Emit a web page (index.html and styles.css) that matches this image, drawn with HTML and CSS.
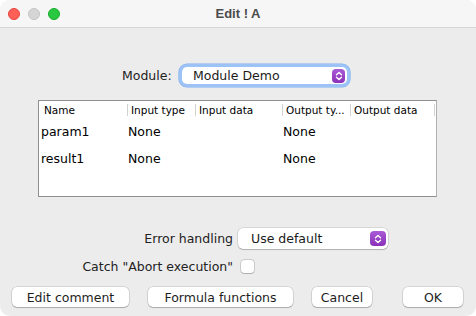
FILE: index.html
```html
<!DOCTYPE html>
<html>
<head>
<meta charset="utf-8">
<link rel="stylesheet" href="styles.css">
</head>
<body>
<div class="window">
  <div class="titlebar">
    <div class="lights">
      <span class="light red"></span>
      <span class="light gray"></span>
      <span class="light green"></span>
    </div>
    <div class="title">Edit ! A</div>
  </div>
  <div class="content">
    <div class="module-row">
      <span class="label">Module:</span>
      <div class="popup focused">
        <span class="popup-text">Module Demo</span>
        <span class="stepper"><svg width="8" height="10" viewBox="0 0 8 10"><path d="M1.5 3.8 L4 1.5 L6.5 3.8 M1.5 6.2 L4 8.5 L6.5 6.2" fill="none" stroke="#fff" stroke-width="1.4" stroke-linecap="round" stroke-linejoin="round"/></svg></span>
      </div>
    </div>
    <div class="table">
      <div class="thead">
        <div class="th first">Name</div>
        <div class="th">Input type</div>
        <div class="th">Input data</div>
        <div class="th">Output ty...</div>
        <div class="th">Output data</div>
        <div class="th last"></div>
      </div>
      <div class="tr">
        <div class="td first">param1</div>
        <div class="td">None</div>
        <div class="td"></div>
        <div class="td">None</div>
        <div class="td"></div>
      </div>
      <div class="tr">
        <div class="td first">result1</div>
        <div class="td">None</div>
        <div class="td"></div>
        <div class="td">None</div>
        <div class="td"></div>
      </div>
    </div>
    <div class="form">
      <span class="flabel">Error handling</span>
      <div class="popup plain">
        <span class="popup-text">Use default</span>
        <span class="stepper big"><svg width="8" height="10" viewBox="0 0 8 10"><path d="M1.5 3.8 L4 1.5 L6.5 3.8 M1.5 6.2 L4 8.5 L6.5 6.2" fill="none" stroke="#fff" stroke-width="1.4" stroke-linecap="round" stroke-linejoin="round"/></svg></span>
      </div>
      <span class="flabel">Catch "Abort execution"</span>
      <span class="checkbox"></span>
    </div>
    <div class="buttons">
      <button class="btn w-edit">Edit comment</button>
      <button class="btn w-formula">Formula functions</button>
      <button class="btn w-cancel">Cancel</button>
      <button class="btn w-ok">OK</button>
    </div>
  </div>
</div>
</body>
</html>
```

FILE: styles.css
```css
* { box-sizing: border-box; }
html, body { margin: 0; padding: 0; background: #ffffff; }
body { width: 476px; height: 316px; overflow: hidden; font-family: "DejaVu Sans", sans-serif; font-size: 12.5px; color: #1e1e1e; }

.window {
  width: 476px; height: 316px;
  background: #ececec;
  border-radius: 10px;
  overflow: hidden;
  display: flex; flex-direction: column;
}

.titlebar {
  height: 28px;
  background: #f6f6f6;
  border-bottom: 1px solid #d6d6d6;
  display: flex; align-items: center;
  position: relative;
}
.lights { display: flex; gap: 8px; padding-left: 8px; }
.light { width: 12px; height: 12px; border-radius: 50%; display: block; }
.red { background: #fe5f57; border: 0.5px solid #e1473f; }
.gray { background: #d5d5d5; border: 0.5px solid #c4c4c4; }
.green { background: #28c840; border: 0.5px solid #1aab2e; }
.title {
  position: absolute; left: 0; right: 0; top: 0; height: 27px;
  display: flex; align-items: center; justify-content: center;
  font-family: "Liberation Sans", Arial, sans-serif; font-weight: bold; font-size: 13px; color: #4b4b4b;
}

.content { display: flex; flex-direction: column; }

.module-row {
  margin-top: 39px; height: 17px;
  display: flex; align-items: center;
  padding-left: 122px;
}
.label { width: 60px; color: #222; }

.popup {
  background: #fff;
  border-radius: 5px;
  display: flex; align-items: center; justify-content: space-between;
}
.popup.focused {
  width: 165px; height: 17px;
  box-shadow: 0 0 0 3px #9cc2f6, 0 0 0 3.6px #7fb0f2;
}
.popup.plain {
  width: 150px; height: 21px;
  box-shadow: 0 0 0 0.5px rgba(0,0,0,0.18), 0 1px 1px rgba(0,0,0,0.18);
}
.popup-text { padding-left: 11px; color: #1a1a1a; }
.popup.plain .popup-text { padding-left: 13px; }
.stepper {
  width: 13px; height: 14px; margin-right: 2px;
  border-radius: 4px;
  background: linear-gradient(#a95bd6, #8a30b8);
  display: flex; align-items: center; justify-content: center;
}
.stepper.big { width: 16px; height: 15px; margin-right: 2px; }

.table {
  margin-top: 16px; margin-left: 38px;
  width: 399px; height: 97px;
  background: #fff;
  border: 1px solid #8f8f8f;
  border-right-color: #b0b0b0;
  color: #000;
}
.thead, .tr {
  display: grid;
  grid-template-columns: 88px 68px 87px 68px 84px 1fr;
}
.thead { height: 17px; font-size: 10.5px; }
.th {
  display: flex; align-items: center; padding-left: 3px;
  border-left: 1px solid #d2d2d2;
  margin: 3px 0 0;
  height: 12px;
  white-space: nowrap;
}
.th.first { border-left: none; padding-left: 5px; }
.th.last { padding: 0; }
.tr { height: 27px; align-items: center; }
.td { padding-left: 1px; white-space: nowrap; }
.td.first { padding-left: 2px; }

.form {
  margin-top: 31px;
  display: grid;
  grid-template-columns: 233px auto;
  column-gap: 5px;
  row-gap: 10px;
  align-items: center;
  justify-content: start;
}
.flabel { text-align: right; color: #222; white-space: nowrap; }
.checkbox {
  width: 13px; height: 13px; margin-left: 3px;
  background: #fff; border-radius: 3px;
  box-shadow: 0 0 0 0.5px rgba(0,0,0,0.25), 0 0.5px 1px rgba(0,0,0,0.15);
}

.buttons {
  margin-top: 13px;
  display: flex; gap: 19px;
  padding: 0 13px 0 12px;
}
.btn {
  height: 20px; padding: 0;
  font-family: "DejaVu Sans", sans-serif; font-size: 12.5px; color: #1e1e1e;
  background: #fff; border: none; border-radius: 5px;
  box-shadow: 0 0 0 0.5px rgba(0,0,0,0.2), 0 1px 1px rgba(0,0,0,0.2);
}
.w-edit { width: 117px; }
.w-formula { width: 145px; }
.w-cancel { width: 60px; }
.w-ok { width: 60px; margin-left: auto; }
```
